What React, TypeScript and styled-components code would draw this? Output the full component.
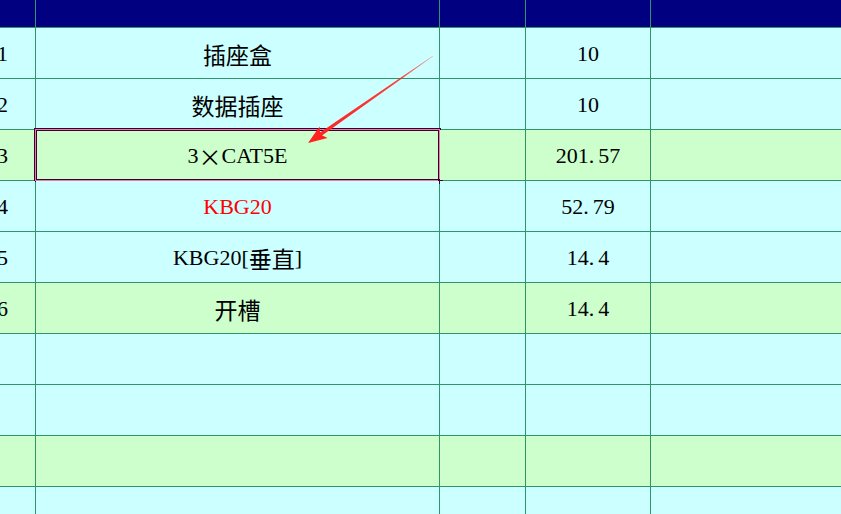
import React from "react";
import styled, { createGlobalStyle } from "styled-components";

const GlobalStyle = createGlobalStyle`
  html, body {
    margin: 0;
    padding: 0;
    width: 841px;
    height: 514px;
    overflow: hidden;
    background: #ccffff;
  }
  #root {
    width: 841px;
    height: 514px;
    overflow: hidden;
    position: relative;
  }
`;

const Sheet = styled.div`
  position: relative;
  width: 871px;
  margin-left: -30px;
  display: grid;
  grid-template-columns: 65px 403px 85px 124px 1fr;
  grid-template-rows: 27px;
  grid-auto-rows: 50px;
  gap: 1px;
  background: #2f9467;
  font-family: "Liberation Serif", "Noto Sans CJK SC", serif;
  font-size: 22px;
  color: #000;
`;

const HeaderCell = styled.div`
  background: #000080;
`;

const Cell = styled.div<{ $band: "cyan" | "green"; $color?: string }>`
  position: relative;
  background: ${(p) => (p.$band === "green" ? "#ccffcc" : "#ccffff")};
  color: ${(p) => p.$color ?? "#000"};
  display: flex;
  align-items: center;
  justify-content: center;
  padding-top: 2px;
  box-sizing: border-box;
  white-space: nowrap;
`;

const Cjk = styled.span`
  font-family: "Noto Sans CJK SC", sans-serif;
  font-size: 23px;
  font-weight: 400;
  vertical-align: 1px;
`;

const Dot = styled.span`
  margin-right: 4px;
`;

const Selection = styled.div`
  position: absolute;
  left: -2px;
  top: -2px;
  right: -2px;
  bottom: -2px;
  border: 1px solid #40002e;
  box-shadow: inset 0 0 0 1px #e07fb0, inset 0 0 0 2px #40002e;
  pointer-events: none;
`;

const FillHandle = styled.div`
  position: absolute;
  right: -3px;
  bottom: -3px;
  width: 5px;
  height: 5px;
  background: #40002e;
`;

const ArrowLayer = styled.svg`
  position: absolute;
  left: 0;
  top: 0;
  width: 841px;
  height: 514px;
  pointer-events: none;
`;

type Row = {
  num: string;
  name: React.ReactNode;
  qty: React.ReactNode;
  band: "cyan" | "green";
  color?: string;
  selected?: boolean;
};

const rows: Row[] = [
  { num: "1", name: <Cjk>插座盒</Cjk>, qty: "10", band: "cyan" },
  { num: "2", name: <Cjk>数据插座</Cjk>, qty: "10", band: "cyan" },
  {
    num: "3",
    name: (
      <>
        3<Cjk>×</Cjk>CAT5E
      </>
    ),
    qty: (
      <>
        201<Dot>.</Dot>57
      </>
    ),
    band: "green",
    selected: true,
  },
  {
    num: "4",
    name: "KBG20",
    qty: (
      <>
        52<Dot>.</Dot>79
      </>
    ),
    band: "cyan",
    color: "#ff0000",
  },
  {
    num: "5",
    name: (
      <>
        KBG20[<Cjk>垂直</Cjk>]
      </>
    ),
    qty: (
      <>
        14<Dot>.</Dot>4
      </>
    ),
    band: "cyan",
  },
  {
    num: "6",
    name: <Cjk>开槽</Cjk>,
    qty: (
      <>
        14<Dot>.</Dot>4
      </>
    ),
    band: "green",
  },
  { num: "", name: "", qty: "", band: "cyan" },
  { num: "", name: "", qty: "", band: "cyan" },
  { num: "", name: "", qty: "", band: "green" },
  { num: "", name: "", qty: "", band: "cyan" },
];

function Arrow() {
  const tip = { x: 308, y: 143 };
  const start = { x: 433, y: 56 };
  const dx = start.x - tip.x;
  const dy = start.y - tip.y;
  const len = Math.hypot(dx, dy);
  const ux = dx / len;
  const uy = dy / len;
  const nx = -uy;
  const ny = ux;
  const headLen = 19;
  const headHalf = 7;
  const bx = tip.x + ux * headLen;
  const by = tip.y + uy * headLen;
  const nbx = tip.x + ux * (headLen - 4);
  const nby = tip.y + uy * (headLen - 4);
  const p = (x: number, y: number) => `${x.toFixed(1)},${y.toFixed(1)}`;
  const shaft = [
    p(start.x + nx * 0.3, start.y + ny * 0.3),
    p(start.x - nx * 0.3, start.y - ny * 0.3),
    p(nbx - nx * 1.8, nby - ny * 1.8),
    p(nbx + nx * 1.8, nby + ny * 1.8),
  ].join(" ");
  const head = [
    p(tip.x, tip.y),
    p(bx + nx * headHalf, by + ny * headHalf),
    p(nbx, nby),
    p(bx - nx * headHalf, by - ny * headHalf),
  ].join(" ");
  return (
    <ArrowLayer viewBox="0 0 841 514">
      <defs>
        <linearGradient id="fade" x1={start.x} y1={start.y} x2={tip.x} y2={tip.y} gradientUnits="userSpaceOnUse">
          <stop offset="0" stopColor="#ff3030" stopOpacity="0.35" />
          <stop offset="0.25" stopColor="#ff2a2a" stopOpacity="0.9" />
          <stop offset="1" stopColor="#ff2020" />
        </linearGradient>
      </defs>
      <polygon points={shaft} fill="url(#fade)" />
      <polygon points={head} fill="#ff2020" />
    </ArrowLayer>
  );
}

export default function App() {
  return (
    <>
      <GlobalStyle />
      <Sheet>
        {[0, 1, 2, 3, 4].map((i) => (
          <HeaderCell key={`h${i}`} />
        ))}
        {rows.map((r, i) => (
          <React.Fragment key={i}>
            <Cell $band={r.band}>{r.num}</Cell>
            <Cell $band={r.band} $color={r.color}>
              {r.name}
              {r.selected && (
                <Selection>
                  <FillHandle />
                </Selection>
              )}
            </Cell>
            <Cell $band={r.band} />
            <Cell $band={r.band}>{r.qty}</Cell>
            <Cell $band={r.band} />
          </React.Fragment>
        ))}
      </Sheet>
      <Arrow />
    </>
  );
}
